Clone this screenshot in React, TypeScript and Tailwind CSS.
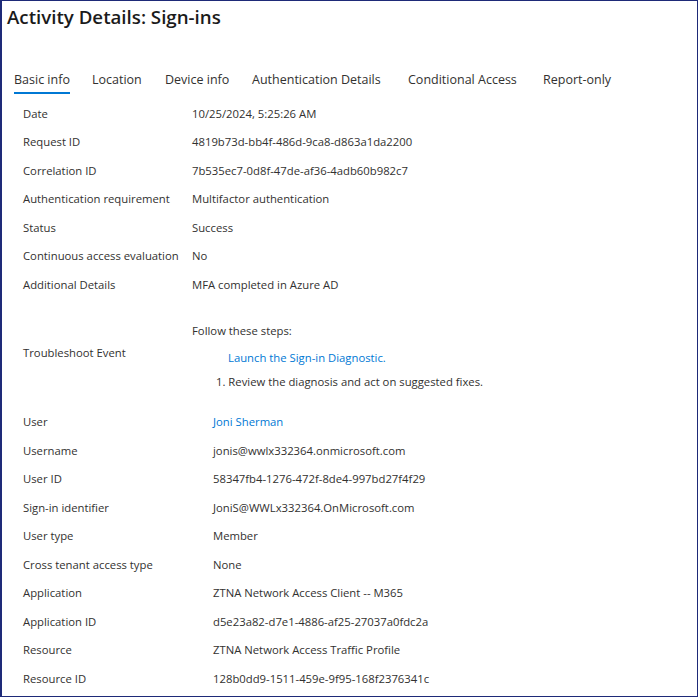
import * as React from "react";

type Row = { label: string; value: React.ReactNode };

const tabs = [
  { name: "Basic info", w: "w-[78px]" },
  { name: "Location", w: "w-[73px]" },
  { name: "Device info", w: "w-[87px]" },
  { name: "Authentication Details", w: "w-[156px]" },
  { name: "Conditional Access", w: "w-[135px]" },
  { name: "Report-only", w: "w-[80px]" },
];

const top: Row[] = [
  { label: "Date", value: "10/25/2024, 5:25:26 AM" },
  { label: "Request ID", value: "4819b73d-bb4f-486d-9ca8-d863a1da2200" },
  { label: "Correlation ID", value: "7b535ec7-0d8f-47de-af36-4adb60b982c7" },
  { label: "Authentication requirement", value: "Multifactor authentication" },
  { label: "Status", value: "Success" },
  { label: "Continuous access evaluation", value: "No" },
  { label: "Additional Details", value: "MFA completed in Azure AD" },
];

const bottom: Row[] = [
  { label: "User", value: <span className="text-[#0078d4]">Joni Sherman</span> },
  { label: "Username", value: "jonis@wwlx332364.onmicrosoft.com" },
  { label: "User ID", value: "58347fb4-1276-472f-8de4-997bd27f4f29" },
  { label: "Sign-in identifier", value: "JoniS@WWLx332364.OnMicrosoft.com" },
  { label: "User type", value: "Member" },
  { label: "Cross tenant access type", value: "None" },
  { label: "Application", value: "ZTNA Network Access Client -- M365" },
  { label: "Application ID", value: "d5e23a82-d7e1-4886-af25-27037a0fdc2a" },
  { label: "Resource", value: "ZTNA Network Access Traffic Profile" },
  { label: "Resource ID", value: "128b0dd9-1511-459e-9f95-168f2376341c" },
];

export default function App() {
  return (
    <div
      className="w-[698px] h-[697px] bg-white border-l-2 border-t border-r border-b border-[#1e2a78] overflow-hidden text-[#323130]"
      style={{ fontFamily: '"Open Sans", "Noto Sans", sans-serif' }}
    >
      <h1 className="pl-[5px] pt-[2px] text-[18.7px] leading-[28px] font-semibold text-[#1b1b1b]">
        Activity Details: Sign-ins
      </h1>

      {/* tabs */}
      <div className="flex pl-[12px] mt-[39px] text-[12.5px]">
        {tabs.map((t, i) => (
          <div key={t.name} className={`${t.w} shrink-0`}>
            <div className="inline-flex flex-col">
              <span className="leading-[20px]">{t.name}</span>
              <span className={`mt-[2px] h-[2px] ${i === 0 ? "bg-[#0078d4]" : "bg-transparent"}`} />
            </div>
          </div>
        ))}
      </div>

      <div className="pl-[21px] mt-[6px] text-[11.3px]">
        <Grid rows={top} col="grid-cols-[169px_1fr]" />

        {/* troubleshoot */}
        <div className="grid grid-cols-[169px_1fr] mt-[23px]">
          <div className="pt-[22px] leading-[16px]">Troubleshoot Event</div>
          <div className="leading-[16px]">
            <div>Follow these steps:</div>
            <div className="pl-[36px] mt-[11px] text-[#0078d4]">Launch the Sign-in Diagnostic.</div>
            <div className="pl-[24px] mt-[8px]">1. Review the diagnosis and act on suggested fixes.</div>
          </div>
        </div>

        <div className="mt-[19px]">
          <Grid rows={bottom} col="grid-cols-[190px_1fr]" />
        </div>
      </div>
    </div>
  );
}

function Grid({ rows, col }: { rows: Row[]; col: string }) {
  return (
    <div>
      {rows.map(r => (
        <div key={r.label} className={`grid ${col} h-[28.5px] items-center`}>
          <div>{r.label}</div>
          <div>{r.value}</div>
        </div>
      ))}
    </div>
  );
}
